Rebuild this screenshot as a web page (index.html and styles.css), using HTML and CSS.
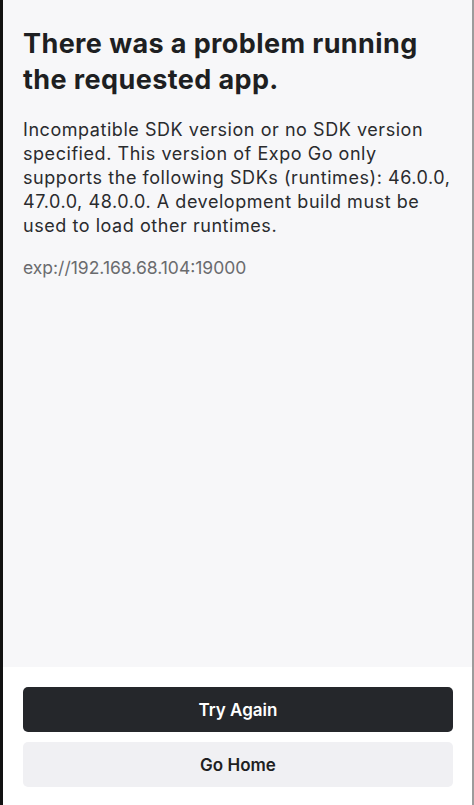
FILE: index.html
```html
<!DOCTYPE html>
<html lang="en">
<head>
    <meta charset="UTF-8">
    <meta name="viewport" content="width=device-width, initial-scale=1.0">
    <title>Error</title>
    <link rel="stylesheet" href="styles.css">
</head>
<body>

    <div class="screen">
        <!-- error message -->
        <div class="error-body">
            <h1 class="error-title">There was a problem running the requested app.</h1>
            <p class="error-text">Incompatible SDK version or no SDK version specified. This version of Expo Go only supports the following SDKs (runtimes): 46.0.0, 47.0.0, 48.0.0. A development build must be used to load other runtimes.</p>
            <p class="error-url">exp://192.168.68.104:19000</p>
        </div>

        <!-- actions -->
        <div class="actions">
            <button class="btn btn-primary">Try Again</button>
            <button class="btn btn-secondary">Go Home</button>
        </div>
    </div>

</body>
</html>
```

FILE: styles.css
```css
body {
    margin: 0;
    font-family: Inter, "Noto Sans", sans-serif;
    background-color: #fff;
}

.screen {
    height: 805px;
    display: flex;
    flex-direction: column;
    border-left: 3px solid #121212;
    border-right: 2px solid #9c9c9c;
    box-sizing: border-box;
}

.error-body {
    flex: 1;
    background-color: #f7f7f9;
    padding: 26px 20px 0 20px;
}

.error-title {
    margin: 0 0 20px 0;
    font-size: 27px;
    line-height: 36px;
    font-weight: 700;
    letter-spacing: 0.4px;
    color: #1e1f22;
}

.error-text {
    margin: 0 0 19px 0;
    font-size: 18px;
    line-height: 24px;
    letter-spacing: 0.55px;
    color: #2a2b2e;
}

.error-url {
    margin: 0;
    font-size: 17.5px;
    line-height: 22px;
    color: #6a6b6e;
}

.actions {
    display: flex;
    flex-direction: column;
    gap: 10px;
    padding: 20px 19px 18px 20px;
    background-color: #fff;
}

.btn {
    height: 45px;
    border: none;
    border-radius: 5px;
    font-family: inherit;
    font-size: 17px;
    font-weight: 600;
    cursor: pointer;
}

.btn-primary {
    background-color: #25272b;
    color: #fff;
}

.btn-secondary {
    background-color: #f0f0f3;
    color: #1e1f22;
}
```
